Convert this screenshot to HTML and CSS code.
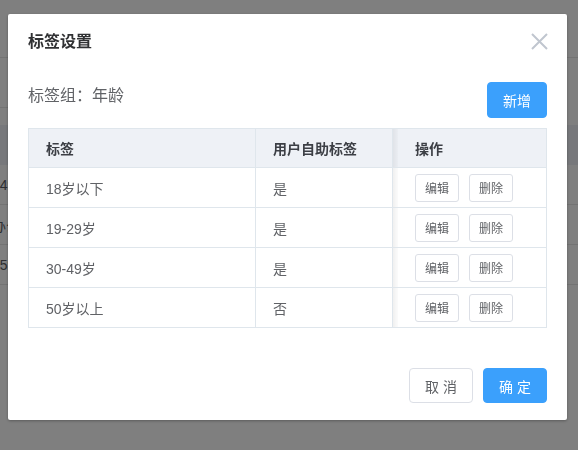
FILE: index.html
```html
<!DOCTYPE html>
<html lang="zh-CN">
<head>
<meta charset="utf-8">
<title>标签设置</title>
<link rel="stylesheet" href="styles.css">
</head>
<body>
<div class="page">
  <div class="topbar"></div>
  <div class="spacer"><div class="side-line"></div></div>
  <div class="thead"></div>
  <div class="trow"><span class="frag">-49</span></div>
  <div class="trow"><span class="frag frag-cn">办公区</span></div>
  <div class="trow"><span class="frag">-59</span></div>
</div>

<div class="mask">
  <div class="dialog">
    <div class="dialog-header">
      <span class="dialog-title">标签设置</span>
      <button class="dialog-close" aria-label="关闭">
        <svg width="17" height="17" viewBox="0 0 17 17"><path d="M1 1 L16 16 M16 1 L1 16" stroke="#c0c6cf" stroke-width="2" fill="none"/></svg>
      </button>
    </div>
    <div class="dialog-body">
      <div class="group-row">
        <span class="group-label">标签组：年龄</span>
        <button class="btn btn-primary btn-add">新增</button>
      </div>
      <div class="table">
        <div class="tr th">
          <div class="td c1">标签</div>
          <div class="td c2">用户自助标签</div>
          <div class="td c3">操作</div>
        </div>
        <div class="tr">
          <div class="td c1">18岁以下</div>
          <div class="td c2">是</div>
          <div class="td c3"><button class="btn-mini">编辑</button><button class="btn-mini">删除</button></div>
        </div>
        <div class="tr">
          <div class="td c1">19-29岁</div>
          <div class="td c2">是</div>
          <div class="td c3"><button class="btn-mini">编辑</button><button class="btn-mini">删除</button></div>
        </div>
        <div class="tr">
          <div class="td c1">30-49岁</div>
          <div class="td c2">是</div>
          <div class="td c3"><button class="btn-mini">编辑</button><button class="btn-mini">删除</button></div>
        </div>
        <div class="tr">
          <div class="td c1">50岁以上</div>
          <div class="td c2">否</div>
          <div class="td c3"><button class="btn-mini">编辑</button><button class="btn-mini">删除</button></div>
        </div>
      </div>
    </div>
    <div class="dialog-footer">
      <button class="btn btn-default">取 消</button>
      <button class="btn btn-primary">确 定</button>
    </div>
  </div>
</div>
</body>
</html>
```

FILE: styles.css
```css
* { box-sizing: border-box; }
html, body { margin: 0; padding: 0; }
body {
  width: 578px;
  height: 450px;
  overflow: hidden;
  background: #fff;
  font-family: "Liberation Sans", "Noto Sans CJK SC", sans-serif;
  color: #606266;
}

/* underlying page */
.page { width: 578px; }
.topbar { height: 58px; border-bottom: 1px solid #e6e6e6; }
.spacer { height: 67px; }
.side-line { width: 20px; height: 50px; border-bottom: 1px solid #e6e6e6; }
.thead { height: 40px; background: #eef1f6; }
.trow {
  height: 40px;
  border-bottom: 1px solid #e6e6e6;
  display: flex;
  align-items: center;
  font-size: 14px;
  color: #5a5d63;
}
.frag { margin-left: -5px; }
.frag-cn { margin-left: -8px; }

/* overlay */
.mask {
  position: fixed;
  inset: 0;
  background: rgba(0, 0, 0, 0.5);
  padding: 14px 0 0 8px;
}
.dialog {
  width: 559px;
  height: 406px;
  background: #fff;
  border-radius: 2px;
  box-shadow: 0 1px 3px rgba(0, 0, 0, 0.3);
  position: relative;
}
.dialog-header { padding: 16px 20px 0; height: 54px; }
.dialog-title {
  font-size: 16px;
  line-height: 24px;
  font-weight: bold;
  color: #303133;
}
.dialog-close {
  position: absolute;
  top: 19px;
  right: 19px;
  width: 17px;
  height: 17px;
  padding: 0;
  border: 0;
  background: none;
  display: flex;
}
.dialog-body { padding: 14px 20px 0; }
.group-row {
  display: flex;
  justify-content: space-between;
  align-items: flex-start;
  height: 36px;
}
.group-label {
  font-size: 16px;
  line-height: 24px;
  margin-top: 2px;
  color: #606266;
}

.btn {
  height: 35px;
  width: 64px;
  border-radius: 4px;
  font-size: 14px;
  font-family: inherit;
  padding: 0;
  cursor: pointer;
}
.btn-primary { background: #3ba0fc; border: 1px solid #3ba0fc; color: #fff; }
.btn-default { background: #fff; border: 1px solid #dcdfe6; color: #606266; }
.btn-add { width: 60px; height: 36px; }

.table {
  margin-top: 10px;
  width: 519px;
  border: 1px solid #dfe6ec;
  border-bottom: 0;
}
.tr {
  display: flex;
  height: 40px;
  border-bottom: 1px solid #dfe6ec;
  font-size: 14px;
  color: #606266;
}
.th { height: 39px; background: #eef1f6; font-weight: bold; color: #3c3f45; }
.td {
  display: flex;
  align-items: center;
  padding-left: 17px;
}
.c1 { width: 227px; border-right: 1px solid #dfe6ec; }
.c2 { width: 137px; border-right: 1px solid #dfe6ec; }
.c3 {
  flex: 1;
  padding-left: 22px;
  gap: 10px;
  background-image: linear-gradient(90deg, rgba(0, 0, 0, 0.06), rgba(0, 0, 0, 0.015) 5px, transparent 5px);
}
.btn-mini {
  width: 44px;
  height: 28px;
  padding: 0;
  border: 1px solid #dcdfe6;
  border-radius: 3px;
  background: #fff;
  font-family: inherit;
  font-size: 12px;
  color: #606266;
}

.dialog-footer {
  display: flex;
  justify-content: flex-end;
  gap: 10px;
  padding: 40px 20px 16px;
}
```
